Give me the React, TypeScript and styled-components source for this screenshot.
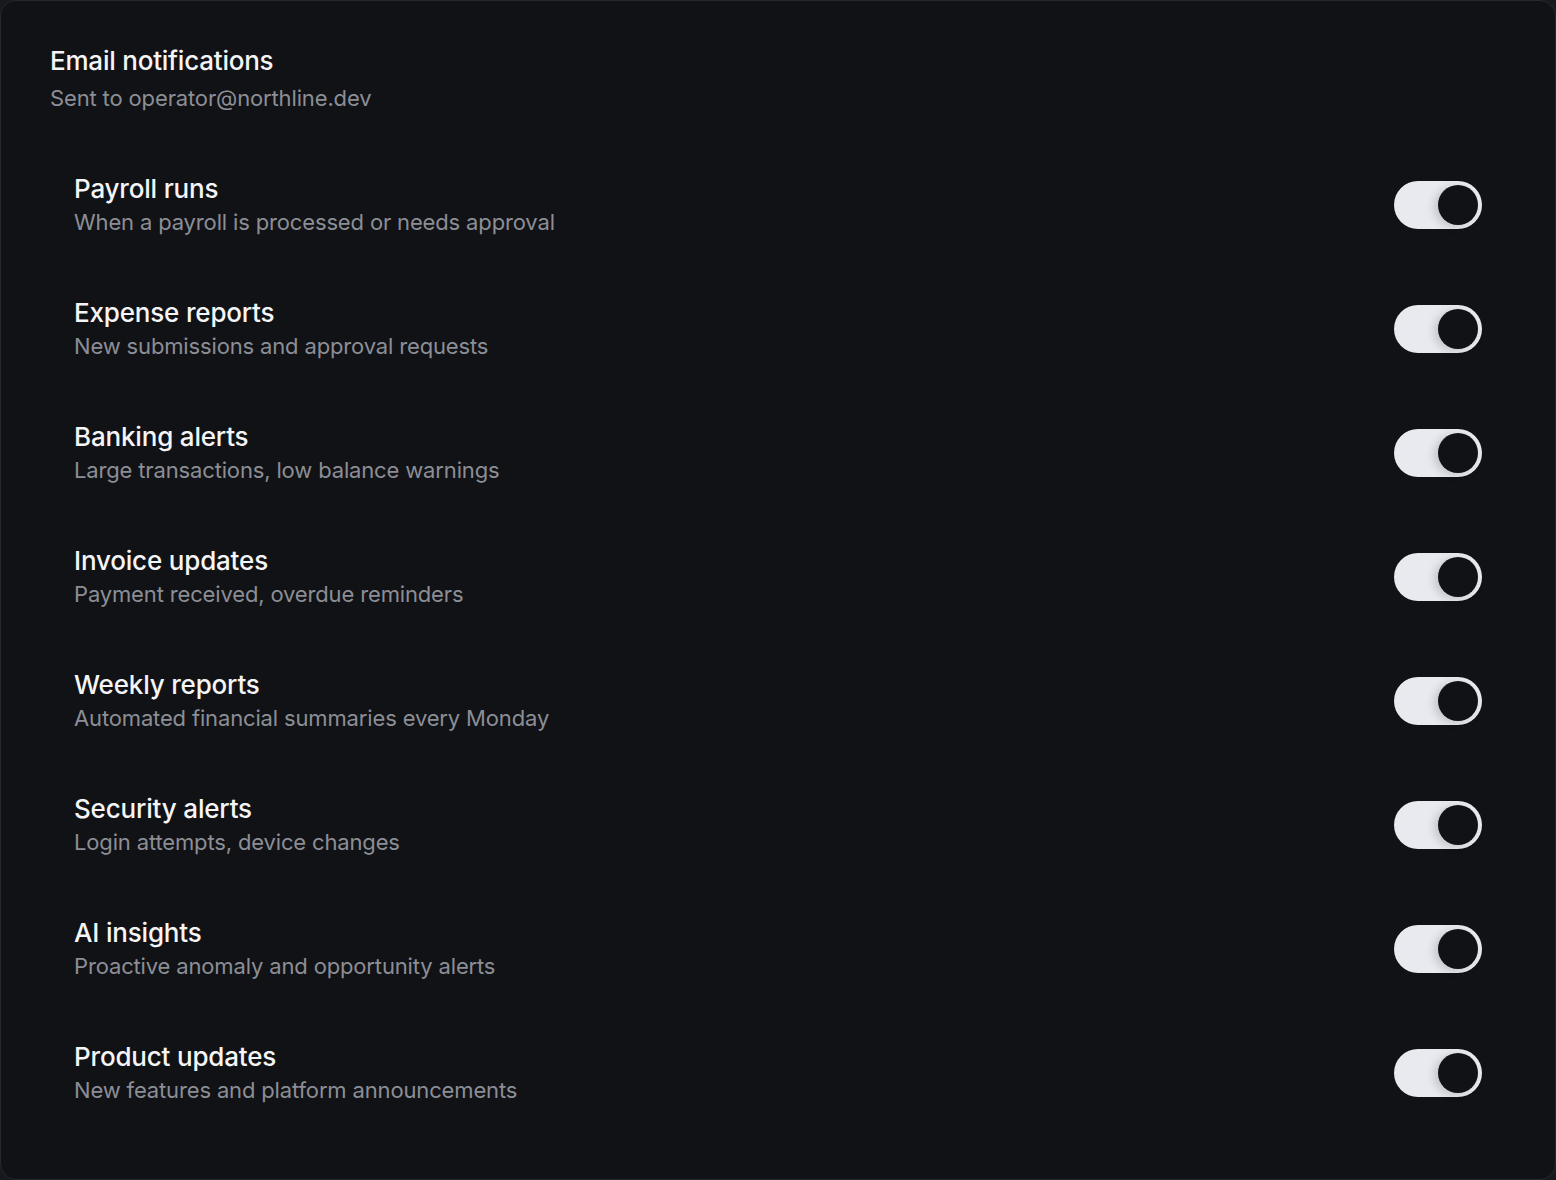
import styled, { createGlobalStyle } from 'styled-components';

const GlobalStyle = createGlobalStyle`
  html, body {
    margin: 0;
    padding: 0;
    background: #18191c;
  }
  body {
    font-family: Inter, "Noto Sans", sans-serif;
    -webkit-font-smoothing: antialiased;
  }
`;

const items = [
  { title: 'Payroll runs', desc: 'When a payroll is processed or needs approval' },
  { title: 'Expense reports', desc: 'New submissions and approval requests' },
  { title: 'Banking alerts', desc: 'Large transactions, low balance warnings' },
  { title: 'Invoice updates', desc: 'Payment received, overdue reminders' },
  { title: 'Weekly reports', desc: 'Automated financial summaries every Monday' },
  { title: 'Security alerts', desc: 'Login attempts, device changes' },
  { title: 'AI insights', desc: 'Proactive anomaly and opportunity alerts' },
  { title: 'Product updates', desc: 'New features and platform announcements' },
];

export default function App() {
  return (
    <>
      <GlobalStyle />
      <Card>
        <Header>
          <h2>Email notifications</h2>
          <p>Sent to operator@northline.dev</p>
        </Header>
        <List>
          {items.map((item) => (
            <Row key={item.title}>
              <div className='text'>
                <Title>{item.title}</Title>
                <Desc>{item.desc}</Desc>
              </div>
              <Switch type='button' role='switch' aria-checked $on>
                <span className='thumb' />
              </Switch>
            </Row>
          ))}
        </List>
      </Card>
    </>
  );
}

const Card = styled.section`
  box-sizing: border-box;
  min-height: 1180px;
  background: #111215;
  border: 1px solid #27282c;
  border-radius: 16px;
  padding: 42px 49px 40px;
`;

const Header = styled.header`
  h2 {
    margin: 0;
    font-size: 26px;
    line-height: 36px;
    font-weight: 500;
    color: #f5f5f7;
    letter-spacing: -0.22px;
  }

  p {
    margin: 4px 0 0;
    font-size: 22px;
    line-height: 30px;
    color: #8c8e96;
    letter-spacing: -0.14px;
  }
`;

const List = styled.div`
  margin-top: 30px;
  display: flex;
  flex-direction: column;
`;

const Row = styled.div`
  display: flex;
  align-items: center;
  justify-content: space-between;
  padding: 30px 24px 29px;

  .text {
    display: flex;
    flex-direction: column;
  }
`;

const Title = styled.span`
  font-size: 26px;
  line-height: 32px;
  font-weight: 500;
  color: #f5f5f7;
  letter-spacing: -0.18px;
`;

const Desc = styled.span`
  font-size: 22px;
  line-height: 32px;
  color: #8c8e96;
  letter-spacing: -0.15px;
  margin-top: 1px;
`;

const Switch = styled.button<{ $on?: boolean }>`
  position: relative;
  width: 88px;
  height: 48px;
  border: none;
  padding: 0;
  border-radius: 24px;
  background: ${({ $on }) => ($on ? '#e9e9f0' : '#3a3b40')};
  cursor: pointer;
  flex-shrink: 0;
  margin-top: -2px;

  .thumb {
    position: absolute;
    top: 4px;
    left: ${({ $on }) => ($on ? '44px' : '4px')};
    width: 40px;
    height: 40px;
    border-radius: 50%;
    background: #111215;
    box-shadow: -4px 2px 8px rgba(0, 0, 0, 0.16);
  }
`;
